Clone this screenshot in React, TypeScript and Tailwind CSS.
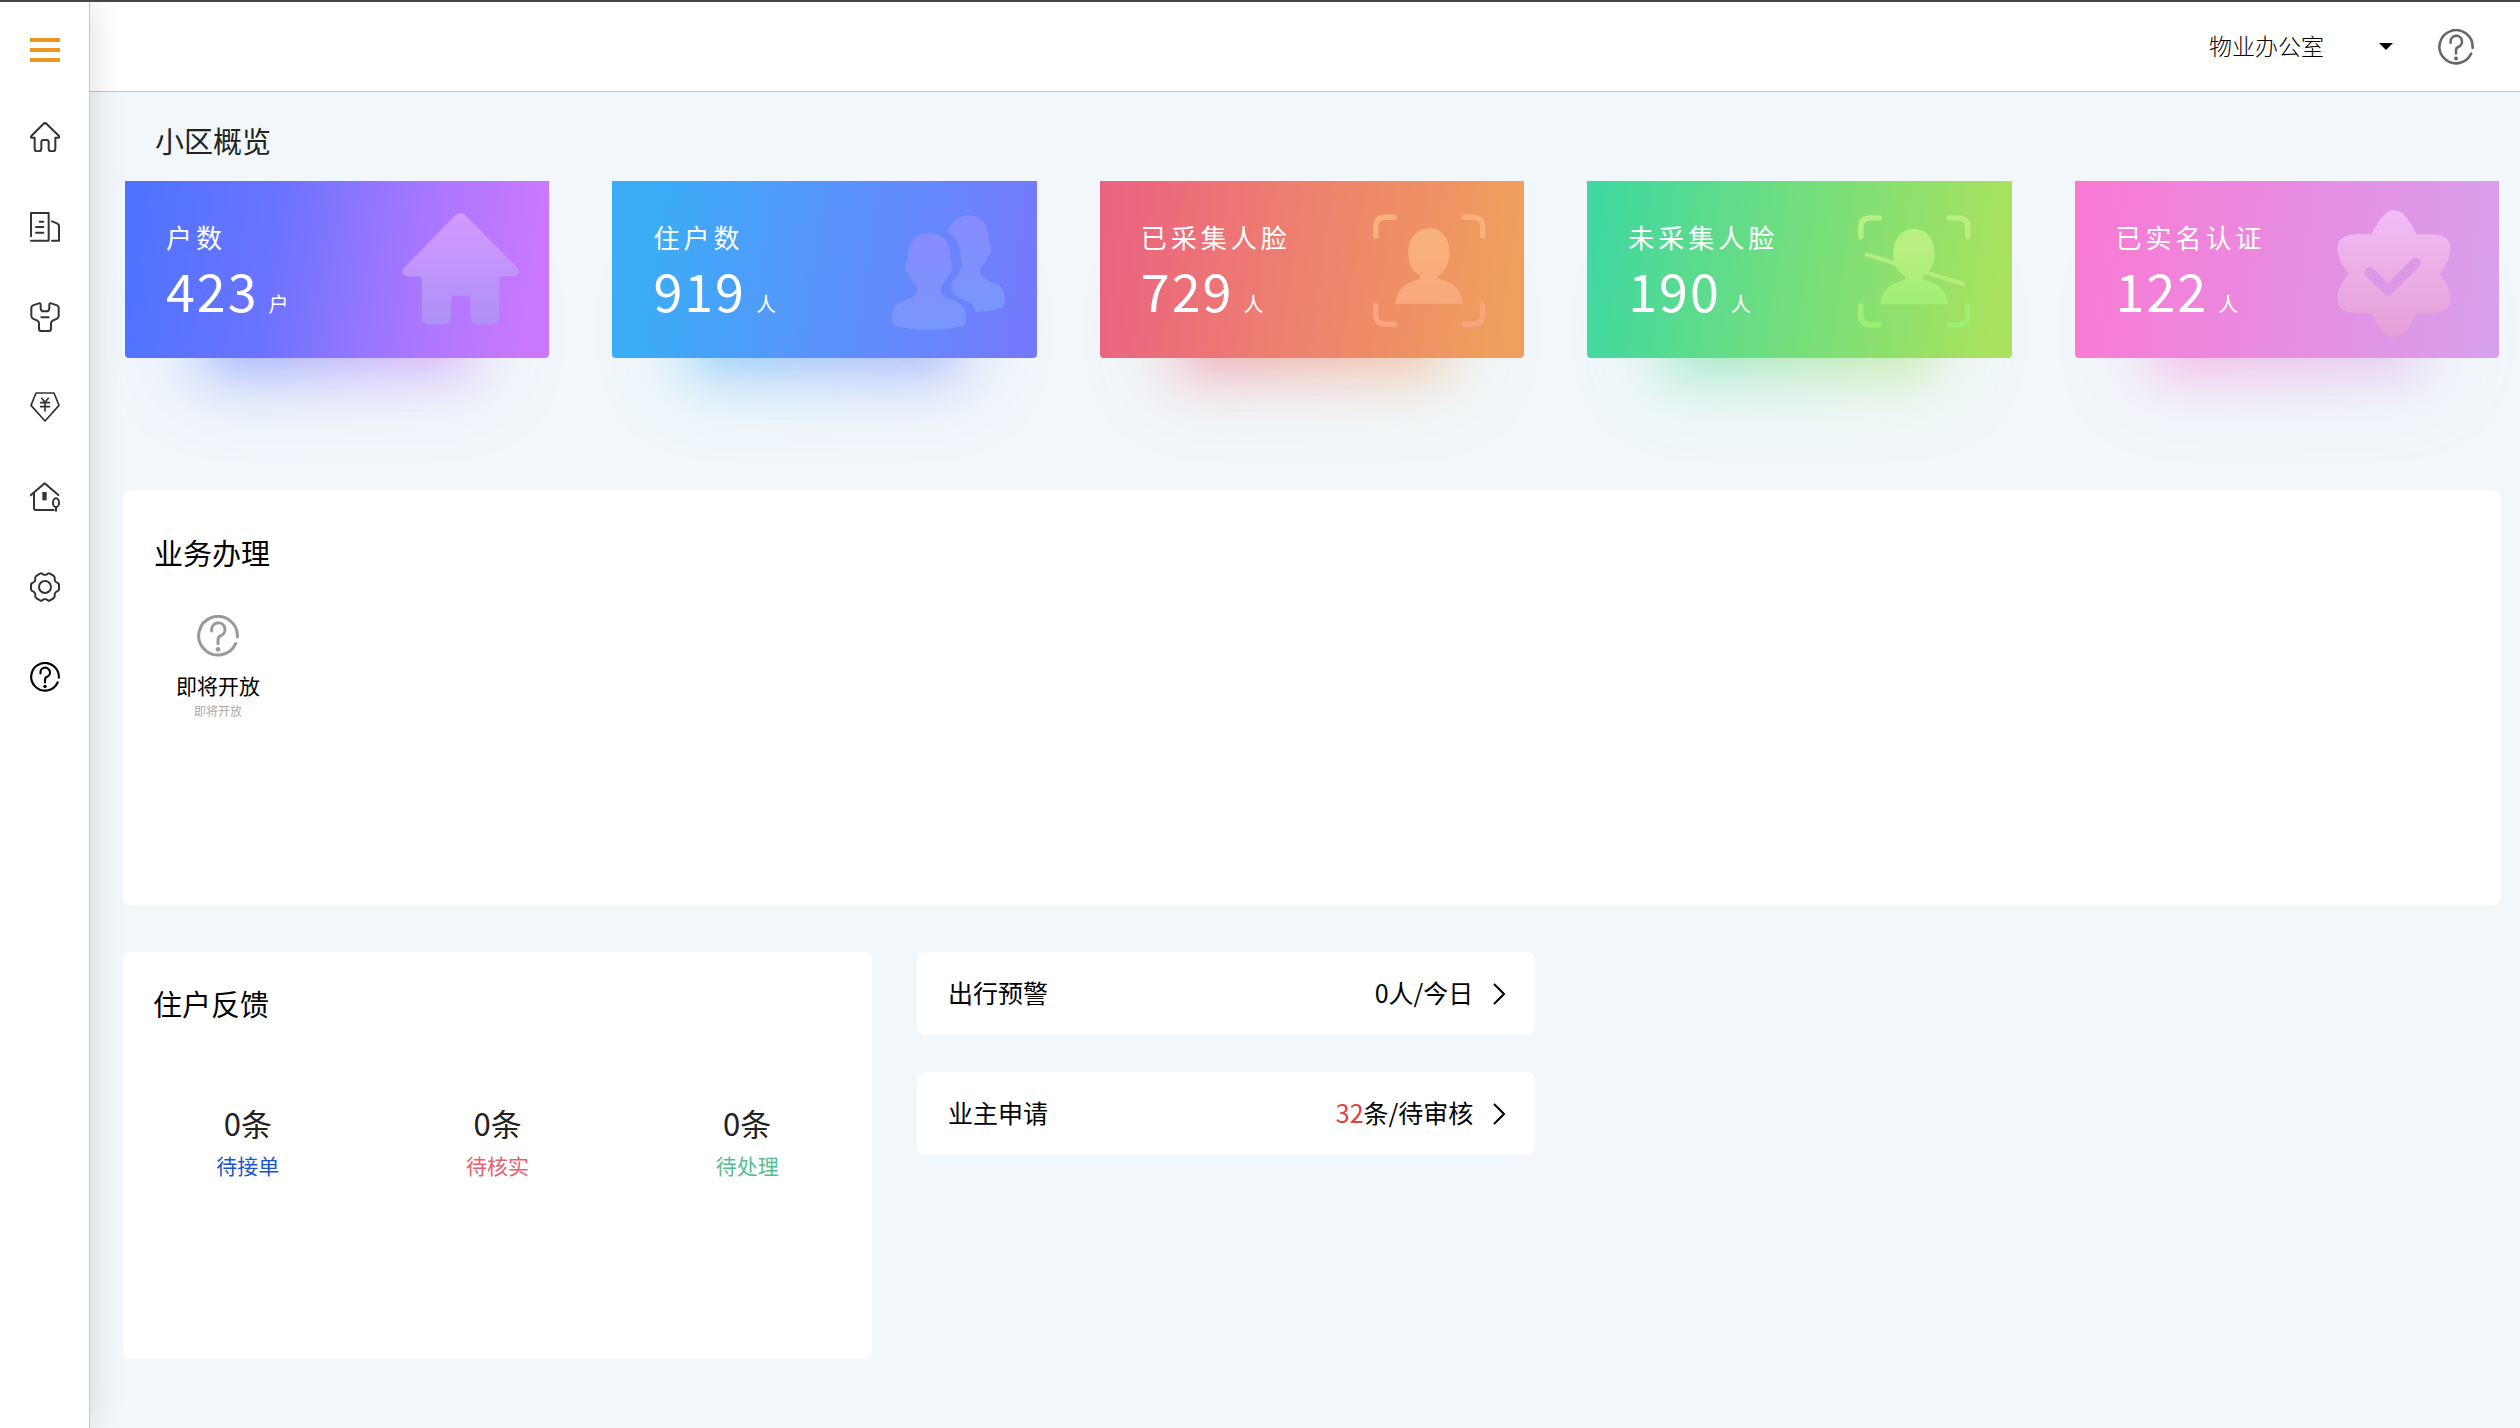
import { useState, type ReactNode } from 'react';

const OFFICES = ['物业办公室'];

function HelpIcon({ className }: { className: string }) {
  return (
    <svg viewBox="261 405 126 126" fill="none" stroke="currentColor" strokeWidth="9" strokeLinecap="round" className={className}>
      <path d="M382 471A58 58 0 1 0 377 491" />
      <path d="M305 453V450A20 20 0 1 1 333 467Q324 470 324 480V491" />
      <circle cx="324" cy="508" r="7" fill="currentColor" stroke="none" />
    </svg>
  );
}

function NavIcon({ viewBox, children }: { viewBox: string; children: ReactNode }) {
  return (
    <svg
      viewBox={viewBox}
      fill="none"
      stroke="currentColor"
      strokeWidth="6"
      strokeLinecap="round"
      strokeLinejoin="round"
      className="w-[30px] h-[30px]"
    >
      {children}
    </svg>
  );
}

const navItems = [
  {
    label: '首页',
    icon: (
      <NavIcon viewBox="90 365 90 90">
        <path d="M94 407L130 371Q135 366 140 371L177 407Q179 412 175 412H166V445Q166 453 158 453H154Q146 453 146 445V425Q146 419 140 419H130Q124 419 124 425V445Q124 453 116 453H111Q104 453 104 445V412H95Q91 412 94 407Z" />
      </NavIcon>
    ),
  },
  {
    label: '小区',
    icon: (
      <NavIcon viewBox="90 635 90 90">
        <path d="M93 708V638H146V721M93 721H146M119 664H130M108 680H130M108 697H130M156 663L171 669Q177 672 177 678V721H156" />
      </NavIcon>
    ),
  },
  {
    label: '维修',
    icon: (
      <NavIcon viewBox="90 906 90 90">
        <path d="M99 916L116 910Q121 908 122 914V925Q123 934 131 934H139Q147 934 148 925V914Q149 908 154 910L171 916Q176 918 176 923V947Q176 953 171 956L158 962Q153 965 153 970V986Q153 993 146 993H124Q117 993 117 986V970Q117 965 112 962L99 956Q94 953 94 947V923Q94 918 99 916Z" />
        <path d="M124 952H146" />
      </NavIcon>
    ),
  },
  {
    label: '收费',
    icon: (
      <NavIcon viewBox="90 95 90 90">
        <path d="M108 98H162L177 135L135 182L93 135Z" strokeWidth="5" />
        <path d="M125 114L135 126L145 114M122 127H148M122 139H148M135 126V152" strokeWidth="5" />
      </NavIcon>
    ),
  },
  {
    label: '房屋',
    icon: (
      <NavIcon viewBox="90 367 90 90">
        <path d="M92 407L134 371L175 406M102 400V445Q102 451 108 451H161" />
        <path d="M127 397H140V422H127Z" fill="currentColor" stroke="none" />
        <ellipse cx="168" cy="429" rx="9" ry="13" />
        <path d="M168 442V453" />
      </NavIcon>
    ),
  },
  {
    label: '设置',
    icon: (
      <NavIcon viewBox="90 635 90 90">
        <path d="M177 673V687Q177 690 173 692L168 695Q164 698 164 703V708Q164 712 160 714L150 720Q147 722 144 720L139 717Q135 715 131 717L126 720Q123 722 120 720L110 714Q106 712 106 708V703Q106 698 102 695L97 692Q93 690 93 687V673Q93 670 97 668L102 665Q106 662 106 657V652Q106 648 110 646L120 640Q123 638 126 640L131 643Q135 645 139 643L144 640Q147 638 150 640L160 646Q164 648 164 652V657Q164 662 168 665L173 668Q177 670 177 673Z" />
        <circle cx="135" cy="680" r="18" />
      </NavIcon>
    ),
  },
];

function HouseArt() {
  return (
    <svg viewBox="809 213 510 528" className="h-full shrink-0">
      <defs>
        <linearGradient id="house" x1="0" y1="0" x2="0" y2="1">
          <stop offset="0" stopColor="#d499ff" />
          <stop offset="1" stopColor="#ad90f7" />
        </linearGradient>
      </defs>
      <path
        fill="url(#house)"
        d="M1040 315Q1055 302 1070 315L1225 472Q1233 482 1226 491Q1222 497 1214 497H1182Q1171 497 1171 508V617Q1171 641 1147 641H1108Q1085 641 1085 617V567Q1085 555 1073 555H1039Q1027 555 1027 567V617Q1027 641 1003 641H964Q940 641 940 617V508Q940 497 929 497H897Q889 497 885 491Q878 482 887 472Z"
      />
    </svg>
  );
}

function PeopleArt() {
  return (
    <svg viewBox="833 63 510 528" className="h-full shrink-0">
      <defs>
        <linearGradient id="people" x1="0" y1="0" x2="0" y2="1">
          <stop offset="0" stopColor="#878bfd" />
          <stop offset="1" stopColor="#7896fe" />
        </linearGradient>
      </defs>
      <g fill="url(#people)">
        <path d="M1022 218C1065 218 1087 250 1087 303Q1092 310 1090 325Q1087 340 1080 343Q1072 362 1060 373Q1053 387 1060 400Q1066 410 1085 416Q1131 430 1131 462V478Q1130 492 1122 496Q1022 518 920 496Q910 490 910 470Q908 432 950 418Q985 408 986 388Q985 378 978 372Q966 356 962 343Q950 335 950 318Q951 308 956 303C956 250 980 218 1022 218Z" />
        <path d="M1075 216C1090 180 1110 165 1140 165C1180 165 1200 200 1200 245Q1208 258 1206 272Q1203 286 1196 289Q1190 305 1177 318Q1171 328 1175 340Q1185 355 1205 364Q1248 375 1247 408V428Q1245 440 1235 443Q1200 451 1162 454Q1158 452 1157 440Q1152 430 1130 420Q1090 405 1088 385Q1086 370 1090 362Q1110 345 1115 328Q1122 320 1120 310Q1116 298 1115 290Q1114 235 1075 216Z" />
      </g>
    </svg>
  );
}

function FaceArt({ id, from, to, slashed }: { id: string; from: string; to: string; slashed?: boolean }) {
  const paint = `url(#${id})`;
  return (
    <svg viewBox={slashed ? '834 61 510 528' : '825 63 510 528'} className="h-full shrink-0">
      <defs>
        <linearGradient id={id} gradientUnits="userSpaceOnUse" x1="1052" y1="163" x2="1052" y2="497">
          <stop offset="0.3" stopColor={from} />
          <stop offset="1" stopColor={to} />
        </linearGradient>
      </defs>
      <path
        fill="none"
        stroke={paint}
        strokeWidth="16"
        strokeLinecap="round"
        d="M893 227V200Q893 171 922 171H948M1157 171H1183Q1212 171 1212 200V227M1212 434V461Q1212 490 1183 490H1157M948 490H922Q893 490 893 461V434"
      />
      <path
        fill={paint}
        d="M1052 204C1090 204 1113 235 1113 278C1113 315 1095 335 1078 346Q1076 354 1086 357Q1145 370 1153 425V429H951Q955 372 1020 357Q1028 354 1026 346C1006 335 990 315 990 278C990 235 1014 204 1052 204Z"
      />
      {slashed && <path d="M906 279L1203 369" stroke="#b3ee7d" strokeWidth="12" />}
    </svg>
  );
}

function BadgeArt() {
  return (
    <svg viewBox="842 63 510 528" className="h-full shrink-0">
      <defs>
        <linearGradient id="badge" x1="0" y1="0" x2="0" y2="1">
          <stop offset="0" stopColor="#f0bdf6" />
          <stop offset="1" stopColor="#e59fd5" />
        </linearGradient>
      </defs>
      <path
        fill="url(#badge)"
        d="M972 222C995 175 1015 150 1039 150C1064 150 1083 175 1106 222H1142C1200 222 1212 245 1206 277Q1200 310 1175 340Q1200 370 1206 400C1214 438 1195 458 1142 458H1106C1083 505 1064 529 1039 529C1015 529 995 505 972 458H936C883 458 865 438 871 400Q878 370 904 340Q878 310 871 277C866 245 878 222 936 222Z"
      />
      <path d="M967 336L1021 390L1103 307" fill="none" stroke="#dd99e6" strokeWidth="31" strokeLinecap="round" strokeLinejoin="round" />
    </svg>
  );
}

const overview = [
  {
    label: '户数',
    value: 423,
    unit: '户',
    bg: 'bg-[linear-gradient(98deg,#4f73ff_4%,#6b73ff_35%,#a877ff_68%,#c978fd_95%)]',
    art: <HouseArt />,
  },
  {
    label: '住户数',
    value: 919,
    unit: '人',
    bg: 'bg-[linear-gradient(98deg,#3badf7_10%,#5893fa_50%,#7579fd_97%)]',
    art: <PeopleArt />,
  },
  {
    label: '已采集人脸',
    value: 729,
    unit: '人',
    bg: 'bg-[linear-gradient(98deg,#eb6380_3%,#ed7f6f_45%,#f09f5c_95%)]',
    art: <FaceArt id="face" from="#f8b17b" to="#f8a37f" />,
  },
  {
    label: '未采集人脸',
    value: 190,
    unit: '人',
    bg: 'bg-[linear-gradient(98deg,#40d8a0_3%,#74de7d_50%,#a9e25e_95%)]',
    art: <FaceArt id="face-missing" from="#b8ef80" to="#97ef70" slashed />,
  },
  {
    label: '已实名认证',
    value: 122,
    unit: '人',
    bg: 'bg-[linear-gradient(98deg,#f97ad4_3%,#e88be0_48%,#d8a0ec_97%)]',
    art: <BadgeArt />,
  },
];

const feedback = [
  { label: '待接单', count: 0, color: 'text-[#1c54d0]' },
  { label: '待核实', count: 0, color: 'text-[#e8606f]' },
  { label: '待处理', count: 0, color: 'text-[#57bd90]' },
];

const notices = [
  { label: '出行预警', count: 0, suffix: '人/今日', color: 'text-black' },
  { label: '业主申请', count: 32, suffix: '条/待审核', color: 'text-[#e0403c]' },
];

function App() {
  const [office, setOffice] = useState(OFFICES[0]);

  return (
    <div className="flex flex-col min-h-screen bg-[#f1f7fa] font-['Noto_Sans_CJK_SC',sans-serif] text-black">
      <div className="h-0.5 bg-[#454545]" />

      <div className="flex flex-1">
        {/* Sidebar */}
        <aside className="relative z-10 w-[90px] shrink-0 bg-white border-r border-[#c3cacf] shadow-[0_0_36px_rgba(0,0,0,0.14)] [clip-path:inset(0_-60px_0_0)]">
          <button aria-label="展开菜单" className="flex items-center justify-center w-full h-[90px] pt-1.5">
            <svg viewBox="0 0 30 24" className="w-[30px] h-6" fill="#ec951f">
              <path d="M0 0h30v4H0zM0 10h30v4H0zM0 20h30v4H0z" />
            </svg>
          </button>
          <nav className="flex flex-col text-[#333]">
            {navItems.map((item) => (
              <a key={item.label} href="#" aria-label={item.label} className="flex items-center justify-center h-[90px]">
                {item.icon}
              </a>
            ))}
            <a href="#" aria-label="帮助" className="flex items-center justify-center h-[90px] text-black">
              <HelpIcon className="w-[30px] h-[30px]" />
            </a>
          </nav>
        </aside>

        <div className="flex-1 min-w-0">
          {/* Header */}
          <header className="flex items-center justify-end h-[90px] pr-[46px] bg-white border-b border-[#c0c4c6]">
            <label className="relative flex items-center">
              <select
                aria-label="办公室"
                value={office}
                onChange={(e) => setOffice(e.target.value)}
                className="appearance-none w-[184px] pb-1 bg-transparent text-[23px] leading-8 font-light text-black focus:outline-none"
              >
                {OFFICES.map((o) => (
                  <option key={o}>{o}</option>
                ))}
              </select>
              <svg viewBox="0 0 14 7" className="absolute right-0 w-3.5 h-[7px] pointer-events-none">
                <path d="M0 0h14L7 7z" />
              </svg>
            </label>
            <button aria-label="帮助" className="ml-[45px] text-[#666]">
              <HelpIcon className="w-9 h-9" />
            </button>
          </header>

          <main className="pl-[33px] pr-[19px] pt-7 pb-16">
            <h2 className="pl-8 mb-[21px] text-[29px] leading-10 text-[#222]">小区概览</h2>

            {/* Overview cards */}
            <div className="grid grid-cols-5 gap-[63px] px-0.5">
              {overview.map((card) => (
                <div key={card.label} className="relative isolate">
                  <div className={`absolute -z-10 inset-x-[14%] top-1/2 -bottom-7 blur-2xl opacity-20 ${card.bg}`} />
                  <div className={`absolute -z-10 inset-x-[20%] top-1/2 -bottom-3 blur-xl opacity-40 ${card.bg}`} />
                  <div className={`flex justify-between h-[177px] pl-[41px] rounded-b text-white ${card.bg}`}>
                    <div className="pt-[38px] whitespace-nowrap">
                      <div className="text-[26px] leading-9 tracking-[4px]">{card.label}</div>
                      <div className="flex items-baseline leading-[70px]">
                        <span className="text-[52px] tracking-[2px]">{card.value}</span>
                        <span className="ml-2.5 text-xl">{card.unit}</span>
                      </div>
                    </div>
                    {card.art}
                  </div>
                </div>
              ))}
            </div>

            {/* Services */}
            <section className="mt-[132px] min-h-[415px] pl-[31px] pt-[42px] bg-white rounded-lg">
              <h2 className="text-[29px] leading-10">业务办理</h2>
              <div className="flex mt-[43px]">
                <a href="#" className="flex flex-col items-center w-32">
                  <HelpIcon className="w-[42px] h-[42px] text-[#999]" />
                  <span className="mt-3 text-[21px] leading-8">即将开放</span>
                  <span className="text-xs leading-5 text-[#aaa]">即将开放</span>
                </a>
              </div>
            </section>

            <div className="flex items-start gap-[45px] mt-[47px]">
              {/* Resident feedback */}
              <section className="w-[31.5%] min-h-[407px] pt-[31px] bg-white rounded-lg">
                <h2 className="pl-[30px] text-[29px] leading-10">住户反馈</h2>
                <div className="grid grid-cols-3 mt-[76px] text-center">
                  {feedback.map((item) => (
                    <div key={item.label}>
                      <div className="text-[31px] leading-[48px] text-[#222]">{item.count}条</div>
                      <div className={`text-[21px] leading-9 ${item.color}`}>{item.label}</div>
                    </div>
                  ))}
                </div>
              </section>

              <div className="flex flex-col gap-[37px] w-[26%]">
                {notices.map((item) => (
                  <a
                    key={item.label}
                    href="#"
                    className="flex items-center h-[83px] pl-[31px] pr-[30px] bg-white rounded-lg text-[25px] leading-8"
                  >
                    <span className="mr-auto pb-1">{item.label}</span>
                    <span className="pb-1">
                      <span className={item.color}>{item.count}</span>
                      {item.suffix}
                    </span>
                    <svg viewBox="0 0 12 22" fill="none" stroke="currentColor" strokeWidth="2" className="w-3 h-[22px] ml-5">
                      <path d="M1 1l10 10L1 21" />
                    </svg>
                  </a>
                ))}
              </div>
            </div>
          </main>
        </div>
      </div>
    </div>
  );
}

export default App;
